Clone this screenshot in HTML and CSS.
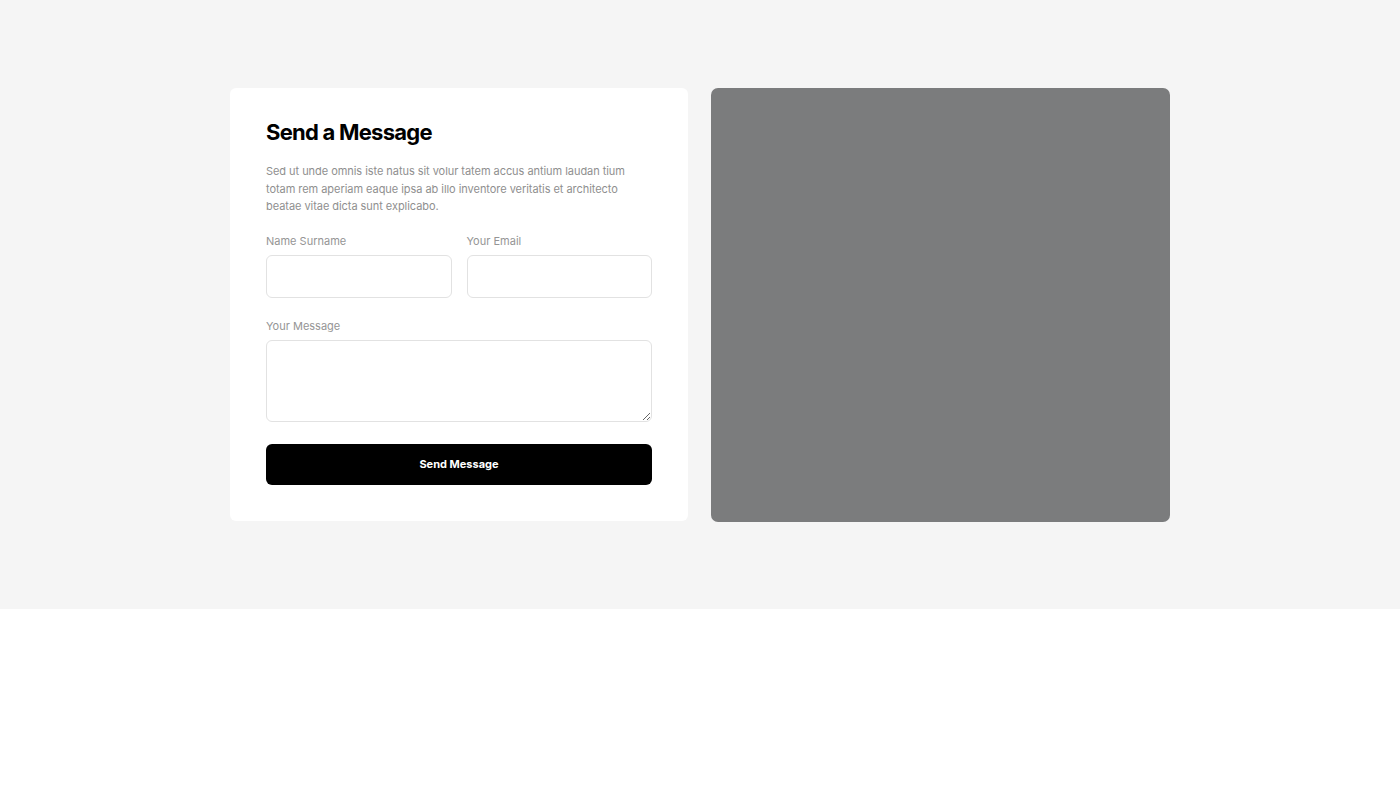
FILE: index.html
```html
<!DOCTYPE html>
<html lang="en">
<head>
<meta charset="utf-8">
<title>Contact</title>
<link rel="stylesheet" href="styles.css">
</head>
<body>
<section class="contact">
  <div class="container">
    <div class="card">
      <h2 class="title">Send a Message</h2>
      <p class="lead">Sed ut unde omnis iste natus sit volur tatem accus antium laudan tium totam rem aperiam eaque ipsa ab illo inventore veritatis et architecto beatae vitae dicta sunt explicabo.</p>
      <form class="form">
        <div class="row">
          <label class="field">
            <span class="label">Name Surname</span>
            <input class="input" type="text">
          </label>
          <label class="field">
            <span class="label">Your Email</span>
            <input class="input" type="email">
          </label>
        </div>
        <label class="field">
          <span class="label">Your Message</span>
          <textarea class="textarea"></textarea>
        </label>
        <button class="btn" type="button">Send Message</button>
      </form>
    </div>
    <div class="map"></div>
  </div>
</section>
</body>
</html>
```
FILE: styles.css
```css
* { box-sizing: border-box; }
html, body { margin: 0; padding: 0; background: #fff; }
body { font-family: Inter, "Noto Sans", sans-serif; color: #000; }

.contact {
  background: #f5f5f5;
  height: 609px;
  padding-top: 88px;
}
.container {
  width: 940px;
  margin: 0 auto;
  display: grid;
  grid-template-columns: 458px 459px;
  column-gap: 23px;
}
.card {
  background: #fff;
  border-radius: 6px;
  padding: 29px 36px 36px;
  height: 433px;
}
.title {
  margin: 0;
  font-size: 22px;
  font-weight: 700;
  letter-spacing: -0.75px;
  line-height: 30px;
}
.lead {
  margin: 16px 0 0;
  font-size: 11px;
  line-height: 17.5px;
  color: #8f8f8f;
  letter-spacing: -0.05px;
}
.form { margin-top: 18px; }
.row {
  display: grid;
  grid-template-columns: 1fr 1fr;
  column-gap: 15px;
}
.field { display: block; margin-bottom: 20px; }
.row .field { margin-bottom: 21px; }
.label {
  display: block;
  font-size: 11px;
  line-height: 14px;
  color: #959595;
  margin-bottom: 7px;
}
.input, .textarea {
  display: block;
  width: 100%;
  border: 1px solid #e2e2e2;
  border-radius: 6px;
  background: #fff;
  font: inherit;
  outline: none;
}
.input { height: 43px; }
.textarea { height: 82px; resize: vertical; }
.btn {
  display: block;
  width: 100%;
  height: 41px;
  margin-top: 22px;
  background: #000;
  color: #fff;
  border: 0;
  border-radius: 6px;
  font-family: inherit;
  font-size: 11px;
  font-weight: 700;
}
.map {
  background: #7b7c7d;
  border-radius: 7px;
  height: 434px;
}
```
